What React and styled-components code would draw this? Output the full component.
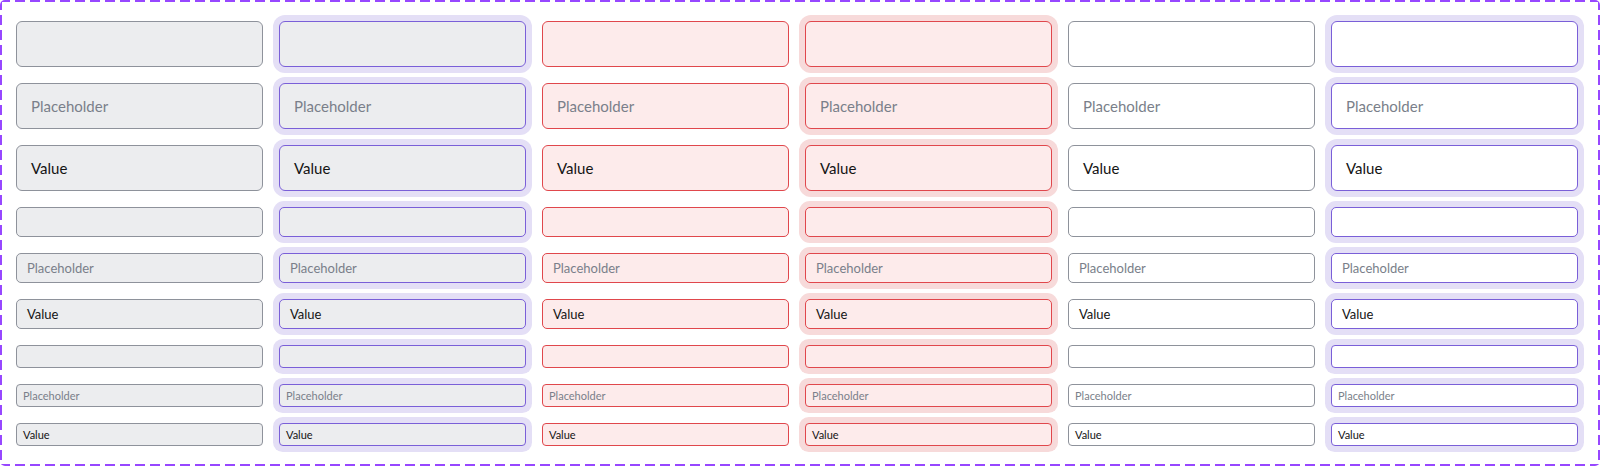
import React from "react";
import styled, { createGlobalStyle, css } from "styled-components";

const GlobalStyle = createGlobalStyle`
  html, body {
    margin: 0;
    padding: 0;
    background: #ffffff;
  }
  body {
    font-family: "Lato", "Noto Sans", sans-serif;
  }
`;

const dash = "#9747FF";

// dashed outline of the component set, drawn with gradients so the dashes are long
const Frame = styled.div`
  box-sizing: border-box;
  width: 1600px;
  padding: 21px 20px 20px 16px;
  border-radius: 5px;
  background:
    repeating-linear-gradient(90deg, ${dash} 0 10px, transparent 10px 15px) top left / 100% 2px no-repeat,
    repeating-linear-gradient(90deg, ${dash} 0 10px, transparent 10px 15px) bottom left / 100% 2px no-repeat,
    repeating-linear-gradient(180deg, ${dash} 0 10px, transparent 10px 15px) top left / 2px 100% no-repeat,
    repeating-linear-gradient(180deg, ${dash} 0 10px, transparent 10px 15px) top right / 2px 100% no-repeat;
`;

const Grid = styled.div`
  display: grid;
  grid-template-columns: repeat(6, 247px);
  column-gap: 16px;
  row-gap: 16px;
`;

const sizes = {
  lg: { height: 46, radius: 6, pad: 14, font: 15 },
  md: { height: 30, radius: 5, pad: 10, font: 13 },
  sm: { height: 23, radius: 4, pad: 6, font: 11 },
};

const tones = {
  gray: { bg: "#ECEDEF", border: "#8E929B", focusBorder: "#7A5FD8", ring: "#E4DFF6" },
  error: { bg: "#FDEBEB", border: "#E0474C", focusBorder: "#E0474C", ring: "#F7DADA" },
  white: { bg: "#FFFFFF", border: "#8E929B", focusBorder: "#7A5FD8", ring: "#E4DFF6" },
};

const Field = styled.div`
  box-sizing: border-box;
  display: flex;
  align-items: center;
  height: ${(p) => sizes[p.$size].height}px;
  padding: 0 ${(p) => sizes[p.$size].pad}px;
  border-radius: ${(p) => sizes[p.$size].radius}px;
  background: ${(p) => tones[p.$tone].bg};
  border: 1px solid ${(p) => tones[p.$tone].border};
  font-size: ${(p) => sizes[p.$size].font}px;
  ${(p) =>
    p.$focus &&
    css`
      border-color: ${tones[p.$tone].focusBorder};
      box-shadow: 0 0 0 6px ${tones[p.$tone].ring};
    `}
`;

const Placeholder = styled.span`
  color: #7A7F8A;
`;

const Value = styled.span`
  color: #141414;
`;

const columns = [
  { tone: "gray", focus: false },
  { tone: "gray", focus: true },
  { tone: "error", focus: false },
  { tone: "error", focus: true },
  { tone: "white", focus: false },
  { tone: "white", focus: true },
];

const rows = ["lg", "md", "sm"].flatMap((size) => [
  { size, content: null },
  { size, content: "placeholder" },
  { size, content: "value" },
]);

export default function App() {
  return (
    <>
      <GlobalStyle />
      <Frame>
        <Grid>
          {rows.map((row, r) =>
            columns.map((col, c) => (
              <Field key={`${r}-${c}`} $size={row.size} $tone={col.tone} $focus={col.focus}>
                {row.content === "placeholder" && <Placeholder>Placeholder</Placeholder>}
                {row.content === "value" && <Value>Value</Value>}
              </Field>
            ))
          )}
        </Grid>
      </Frame>
    </>
  );
}
